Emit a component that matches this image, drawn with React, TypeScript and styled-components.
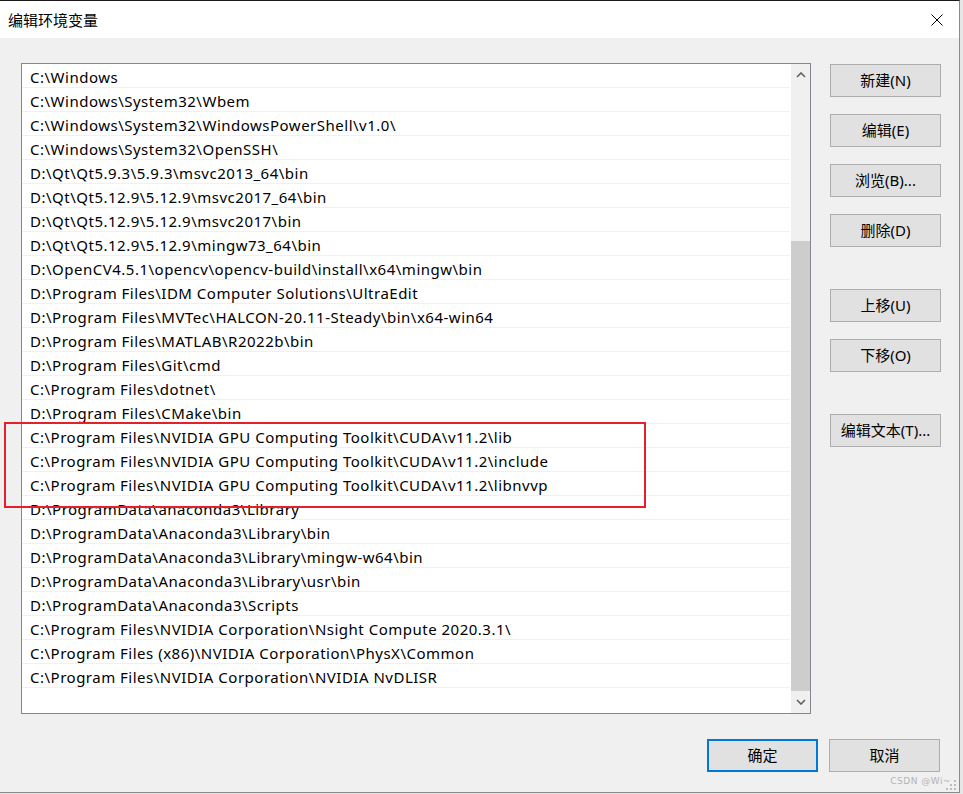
import styled, { createGlobalStyle } from 'styled-components';

const GlobalStyle = createGlobalStyle`
  html, body {
    margin: 0;
    padding: 0;
    background: #e6e6e6;
  }
  body {
    font-family: "Noto Sans", "Noto Sans CJK SC", sans-serif;
  }
`;

const Window = styled.div`
  position: relative;
  width: 960px;
  height: 793px;
  box-sizing: border-box;
  border-top: 1px solid #1a1a1a;
  border-right: 1px solid #8a8a8a;
  border-bottom: 1px solid #8a8a8a;
  background: #f0f0f0;
  display: flex;
  flex-direction: column;
  overflow: hidden;
`;

const TitleBar = styled.div`
  height: 37px;
  flex: none;
  background: #ffffff;
  display: flex;
  align-items: center;
  justify-content: space-between;
  padding: 0 16px 0 8px;
`;

const Title = styled.span`
  font-family: "Noto Sans CJK SC", sans-serif;
  font-size: 15px;
  line-height: 1;
  color: #000;
`;

const CloseIcon = styled.svg`
  width: 12px;
  height: 12px;
`;

const Body = styled.div`
  display: flex;
  padding: 25px 0 0 21px;
`;

const ListBox = styled.div`
  width: 790px;
  height: 651px;
  box-sizing: border-box;
  border: 1px solid #828790;
  background: #ffffff;
  display: flex;
`;

const Rows = styled.div`
  flex: 1;
  overflow: hidden;
`;

const Row = styled.div`
  height: 24px;
  box-sizing: border-box;
  border-bottom: 1px solid #f0f0f0;
  padding: 2px 0 0 8px;
  display: flex;
  align-items: center;
  font-family: "Noto Sans", sans-serif;
  font-size: 15px;
  letter-spacing: 0.5px;
  color: #000;
  white-space: nowrap;
  margin-right: 1px;
`;

const ScrollBar = styled.div`
  width: 19px;
  background: #f0f0f0;
  display: flex;
  flex-direction: column;
`;

const ScrollArrow = styled.div`
  height: 22px;
  flex: none;
  display: flex;
  align-items: center;
  justify-content: center;
`;

const Track = styled.div`
  flex: 1;
  display: flex;
  flex-direction: column;
  justify-content: flex-end;
`;

const Thumb = styled.div`
  background: #cdcdcd;
`;

const SideButtons = styled.div`
  display: flex;
  flex-direction: column;
  margin-left: 19px;
  padding-top: 1px;
`;

const Button = styled.button<{ $gap?: number; $primary?: boolean }>`
  width: 111px;
  height: 33px;
  box-sizing: border-box;
  margin-top: ${({ $gap }) => $gap ?? 0}px;
  background: #e1e1e1;
  border: ${({ $primary }) => ($primary ? '2px solid #0078d7' : '1px solid #adadad')};
  border-radius: 0;
  padding: 0;
  font-family: "Noto Sans", "Noto Sans CJK SC", sans-serif;
  font-size: 15px;
  line-height: 1;
  color: #000;
  display: flex;
  align-items: center;
  justify-content: center;
`;

const Footer = styled.div`
  display: flex;
  justify-content: flex-end;
  gap: 11px;
  padding: 25px 19px 0 0;
`;

const Highlight = styled.div`
  position: absolute;
  left: 4px;
  top: 421px;
  width: 642px;
  height: 86px;
  box-sizing: border-box;
  border: 2px solid #e3202c;
  pointer-events: none;
`;

const Watermark = styled.span`
  position: absolute;
  right: 8px;
  bottom: 6px;
  font-family: "DejaVu Sans", sans-serif;
  font-size: 9px;
  letter-spacing: 0.5px;
  color: #b4b4b4;
`;

const Grip = styled.svg`
  position: absolute;
  right: 2px;
  bottom: 1px;
  width: 12px;
  height: 12px;
`;

const paths = [
  'C:\\Windows',
  'C:\\Windows\\System32\\Wbem',
  'C:\\Windows\\System32\\WindowsPowerShell\\v1.0\\',
  'C:\\Windows\\System32\\OpenSSH\\',
  'D:\\Qt\\Qt5.9.3\\5.9.3\\msvc2013_64\\bin',
  'D:\\Qt\\Qt5.12.9\\5.12.9\\msvc2017_64\\bin',
  'D:\\Qt\\Qt5.12.9\\5.12.9\\msvc2017\\bin',
  'D:\\Qt\\Qt5.12.9\\5.12.9\\mingw73_64\\bin',
  'D:\\OpenCV4.5.1\\opencv\\opencv-build\\install\\x64\\mingw\\bin',
  'D:\\Program Files\\IDM Computer Solutions\\UltraEdit',
  'D:\\Program Files\\MVTec\\HALCON-20.11-Steady\\bin\\x64-win64',
  'D:\\Program Files\\MATLAB\\R2022b\\bin',
  'D:\\Program Files\\Git\\cmd',
  'C:\\Program Files\\dotnet\\',
  'D:\\Program Files\\CMake\\bin',
  'C:\\Program Files\\NVIDIA GPU Computing Toolkit\\CUDA\\v11.2\\lib',
  'C:\\Program Files\\NVIDIA GPU Computing Toolkit\\CUDA\\v11.2\\include',
  'C:\\Program Files\\NVIDIA GPU Computing Toolkit\\CUDA\\v11.2\\libnvvp',
  'D:\\ProgramData\\anaconda3\\Library',
  'D:\\ProgramData\\Anaconda3\\Library\\bin',
  'D:\\ProgramData\\Anaconda3\\Library\\mingw-w64\\bin',
  'D:\\ProgramData\\Anaconda3\\Library\\usr\\bin',
  'D:\\ProgramData\\Anaconda3\\Scripts',
  'C:\\Program Files\\NVIDIA Corporation\\Nsight Compute 2020.3.1\\',
  'C:\\Program Files (x86)\\NVIDIA Corporation\\PhysX\\Common',
  'C:\\Program Files\\NVIDIA Corporation\\NVIDIA NvDLISR',
];

const sideButtons = [
  { label: '新建(N)', gap: 0 },
  { label: '编辑(E)', gap: 17 },
  { label: '浏览(B)...', gap: 17 },
  { label: '删除(D)', gap: 17 },
  { label: '上移(U)', gap: 42 },
  { label: '下移(O)', gap: 17 },
  { label: '编辑文本(T)...', gap: 42 },
];

function Chevron({ up }: { up?: boolean }) {
  return (
    <svg width="10" height="6" viewBox="0 0 10 6">
      <polyline
        points={up ? '1,5 5,1 9,5' : '1,1 5,5 9,1'}
        fill="none"
        stroke="#606060"
        strokeWidth="1.6"
      />
    </svg>
  );
}

export default function App() {
  return (
    <>
      <GlobalStyle />
      <Window>
        <TitleBar>
          <Title>编辑环境变量</Title>
          <CloseIcon viewBox="0 0 12 12">
            <path d="M0.5 0.5 L11.5 11.5 M11.5 0.5 L0.5 11.5" stroke="#000" strokeWidth="1" />
          </CloseIcon>
        </TitleBar>
        <Body>
          <ListBox>
            <Rows>
              {paths.map((p, i) => (
                <Row key={`${i}-${p}`}>{p}</Row>
              ))}
            </Rows>
            <ScrollBar>
              <ScrollArrow>
                <Chevron up />
              </ScrollArrow>
              <Track>
                <Thumb style={{ height: 450 }} />
              </Track>
              <ScrollArrow>
                <Chevron />
              </ScrollArrow>
            </ScrollBar>
          </ListBox>
          <SideButtons>
            {sideButtons.map((b) => (
              <Button key={b.label} $gap={b.gap}>
                {b.label}
              </Button>
            ))}
          </SideButtons>
        </Body>
        <Footer>
          <Button $primary>确定</Button>
          <Button>取消</Button>
        </Footer>
        <Highlight />
        <Watermark>CSDN @Wi~</Watermark>
        <Grip viewBox="0 0 12 12">
          {[
            [9, 1],
            [5, 5],
            [9, 5],
            [1, 9],
            [5, 9],
            [9, 9],
          ].map(([x, y]) => (
            <rect key={`${x}-${y}`} x={x} y={y} width="2" height="2" fill="#bcbcbc" />
          ))}
        </Grip>
      </Window>
    </>
  );
}
